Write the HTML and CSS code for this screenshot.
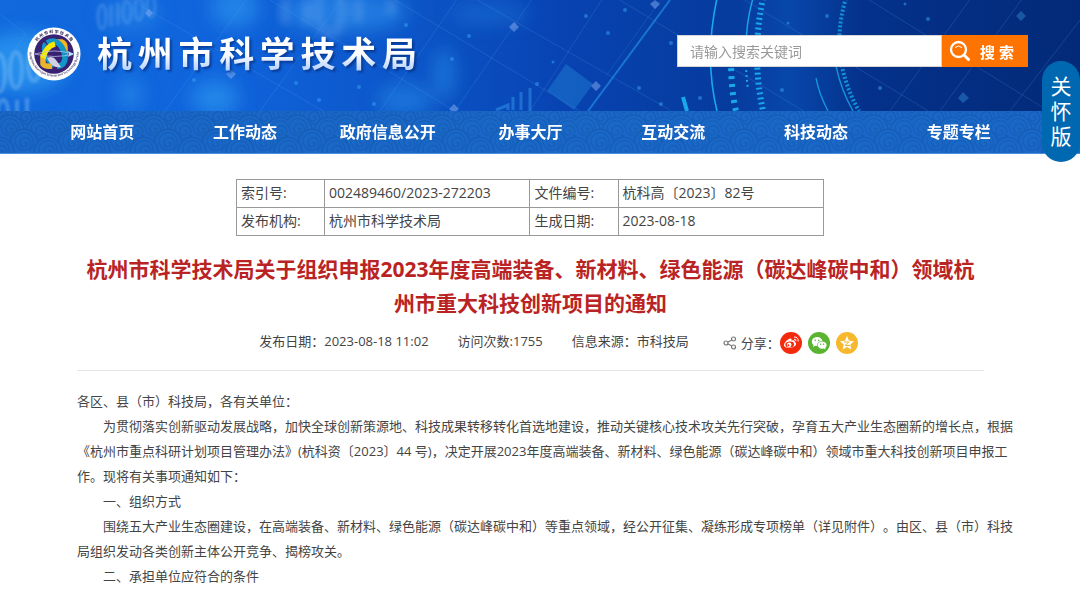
FILE: index.html
```html
<!DOCTYPE html>
<html lang="zh-CN">
<head>
<meta charset="utf-8">
<meta name="viewport" content="width=device-width, initial-scale=1">
<title>杭州市科学技术局</title>
<link rel="stylesheet" href="styles.css">
</head>
<body>
<header class="banner">
  <svg class="banner-art" viewBox="0 0 1080 111" preserveAspectRatio="xMidYMid slice" aria-hidden="true">
    <defs>
      <linearGradient id="sky" x1="0" y1="0" x2="1" y2="0">
        <stop offset="0" stop-color="#1169dc"/><stop offset=".2" stop-color="#1064dc"/>
        <stop offset=".38" stop-color="#0c55c8"/><stop offset=".52" stop-color="#0843b2"/>
        <stop offset=".68" stop-color="#063b9d"/><stop offset=".73" stop-color="#0847aa"/>
        <stop offset=".8" stop-color="#04318b"/><stop offset="1" stop-color="#032a78"/>
      </linearGradient>
      <filter id="soft" x="-50%" y="-50%" width="200%" height="200%"><feGaussianBlur stdDeviation="9"/></filter>
      <filter id="digit" x="-20%" y="-20%" width="140%" height="140%"><feGaussianBlur stdDeviation="1.6"/></filter>
      <filter id="haze" x="-20%" y="-20%" width="140%" height="140%"><feGaussianBlur stdDeviation="4"/></filter>
    </defs>
    <rect width="1080" height="111" fill="url(#sky)"/>
    <g filter="url(#soft)" fill="#2d97f0">
      <ellipse cx="22" cy="62" rx="46" ry="30" opacity=".8"/>
      <ellipse cx="130" cy="14" rx="30" ry="16" opacity=".4"/>
      <ellipse cx="235" cy="8" rx="24" ry="20" opacity=".6"/>
      <ellipse cx="345" cy="12" rx="62" ry="20" opacity=".55"/>
      <ellipse cx="215" cy="98" rx="24" ry="18" opacity=".65"/>
      <ellipse cx="130" cy="94" rx="12" ry="16" opacity=".55"/>
      <ellipse cx="405" cy="100" rx="28" ry="16" opacity=".45"/>
      <ellipse cx="444" cy="74" rx="10" ry="26" opacity=".5"/>
      <ellipse cx="490" cy="14" rx="40" ry="10" opacity=".3"/>
    </g>
    <g filter="url(#digit)" fill="none" stroke="#83c1f5" stroke-width="4" opacity=".45">
      <ellipse cx="-1" cy="73" rx="6" ry="19"/><ellipse cx="16" cy="70" rx="6" ry="18"/><ellipse cx="34" cy="64" rx="6" ry="17"/>
      <ellipse cx="3" cy="111" rx="5" ry="11"/><path d="M17 100v15M27 98v15"/>
    </g>
    <g filter="url(#digit)" fill="none" stroke="#83b5f5" stroke-width="3" opacity=".3">
      <ellipse cx="102" cy="17" rx="4" ry="12"/><path d="M111 5v22M118 3v22"/><ellipse cx="127" cy="12" rx="4" ry="11"/><ellipse cx="139" cy="9" rx="4" ry="11"/><ellipse cx="151" cy="6" rx="4" ry="11"/>
    </g>
    <g filter="url(#haze)" fill="none" stroke="#83b5f5" stroke-width="9" opacity=".3">
      <path d="M285 -2v26M307 0v25M358 -2v25M391 -2v17"/><ellipse cx="330" cy="10" rx="12" ry="24"/>
    </g>
    <g fill="none" stroke="#58a9f5" opacity=".2">
      <path d="M0 14 26 34 4 65M105-15 330 115M250-12 455 111M370-15 580 111M460-10 670 110M600-12 805 112M720-15 930 112M845-15 1050 112M165 111 250-5M260 111 345-5M380 111 460-5M455 111 537-8M530 111 605-5M890 111 973-5M940 111 1025-5M1010 111 1080 20"/>
    </g>
    <g stroke="#2292e8" opacity=".65"><path d="M588 111 670 0" stroke-width="2"/><path d="m606 76 54-75" opacity=".4"/></g>
    <path d="m566 64 27 20-19 26-27-19z" fill="#1d78d0" opacity=".55"/>
    <g fill="#85adf1" opacity=".5">
      <path d="m514 22 5 5-5 5-5-5zM655 0l5 4-5 5-5-5zM596 81l5 5-5 5-5-5zM454 104l5 5-5 4-5-4zM231 70l5 4-5 5-5-5zM149 9l4 4-4 4-4-4z"/>
      <path d="m1021 11 5 5-5 5-5-5zM963 92l6 6-6 5-5-5z" fill="#2e82cc"/>
    </g>
    <g fill="#36a5f1" opacity=".5">
      <circle cx="452" cy="59" r="2"/><circle cx="469" cy="36" r="2"/><circle cx="586" cy="16" r="2"/><circle cx="608" cy="33" r="2"/><circle cx="553" cy="62" r="1.5"/><circle cx="537" cy="84" r="2"/><circle cx="639" cy="88" r="2"/><circle cx="661" cy="104" r="2"/><circle cx="700" cy="98" r="2"/><circle cx="625" cy="10" r="2"/><circle cx="671" cy="43" r="2"/><circle cx="788" cy="23" r="1.5"/><circle cx="782" cy="90" r="2"/><circle cx="827" cy="16" r="2"/><circle cx="905" cy="4" r="1.5"/><circle cx="880" cy="88" r="2"/><circle cx="928" cy="19" r="2"/><circle cx="359" cy="87" r="2"/><circle cx="374" cy="104" r="2"/><circle cx="319" cy="100" r="2"/><circle cx="296" cy="83" r="2"/><circle cx="194" cy="80" r="2"/><circle cx="406" cy="25" r="2"/>
    </g>
    <path d="m496 110 12-5v5M513 97v13M521 92v18M530 88v23" stroke="#2c8ce2" stroke-width="3" fill="none" opacity=".6"/>
    <g fill="none" stroke="#18a9e8">
      <path d="M717-2q-13 60 0 113" stroke-width="1.6"/>
      <path d="M753-2q-8 28-7 58" stroke-width="1.4"/>
      <path d="M746 60q0 15 2 30" stroke-width="2" stroke-dasharray="2 3"/>
      <path d="M731 60q0 30 5 51" stroke-width="6" stroke-dasharray="3 5"/>
      <path d="M763-2q-12 57 0 113" stroke-width="6" stroke-dasharray="2 3"/>
      <path d="m683 97 4 14" stroke-width="4"/>
      <path d="M846-2q-18 58 13 113" stroke-width="4" stroke-dasharray="2 2" opacity=".8"/>
      <path d="M836 66q5 24 17 45M816 78q3 16 12 33" stroke-width="1.4" opacity=".8"/>
    </g>
  </svg>
  <div class="banner-row">
    <a class="brand" href="#">
      <svg class="emblem" viewBox="0 0 54 54" aria-hidden="true">
        <defs>
          <path id="arcTop" d="M6 27a21 21 0 0 1 42 0"/>
          <path id="arcBottom" d="M2.500 25a24.500 24.500 0 1 0 49 0"/>
        </defs>
        <circle cx="27" cy="27" r="26.5" fill="#fff"/>
        <circle cx="27" cy="27" r="19.8" fill="#382173"/>
        <text class="seal-cn" text-anchor="middle"><textPath href="#arcTop" startOffset="50%">杭 州 市 科 学 技 术 局</textPath></text>
        <text class="seal-en" text-anchor="middle"><textPath href="#arcBottom" startOffset="50%">Hangzhou Municipal Science and Technology Bureau</textPath></text>
        <g fill="none" stroke-width="5.500">
          <path d="M28 15h7q3 1 3 6v8" stroke="#f7b51e"/>
          <path d="M18 16q-3 5 0 12 3 8 9 11" stroke="#1196c8" stroke-width="3.500"/>
          <path d="M16 27v10q2 3 9 2" stroke="#e9b52c"/>
          <path d="M20 16q8-5 14 3 7 11 2 18-2 2-6 2" stroke="#1196c8"/>
          <path d="M28 17q-9 2-12 14" stroke="#f5e705"/>
        </g>
        <path d="M20 31q6-3 9 2l5 7q-9 2-14-9z" fill="#d3d0e4"/>
        <path d="M8 27q20-6 38 0-18 5-38 0" fill="none" stroke="#c6cce8" stroke-width=".7"/>
        <path d="m41 24 6 3-6 3 1-3z" fill="#a7e4ff"/>
      </svg>
      <span class="brand-name">杭州市科学技术局</span>
    </a>
    <form class="search" onsubmit="return false">
      <input class="search-input" type="text" placeholder="请输入搜索关键词" aria-label="请输入搜索关键词">
      <button class="search-button" type="submit">
        <svg class="search-icon" viewBox="0 0 22 22" fill="none" stroke="#fff" aria-hidden="true"><circle cx="9.5" cy="9.5" r="7.5" stroke-width="2.3"/><path d="m15 15 4.500 4.500" stroke-width="3" stroke-linecap="round"/><path d="M6 7.500q3.500-3 7 0" stroke-width="1"/></svg>
        <span>搜 索</span>
      </button>
    </form>
  </div>
</header>
<nav class="nav" aria-label="主导航">
  <svg class="nav-pattern" aria-hidden="true">
    <defs>
      <g id="swirl">
        <circle r="14" fill="#1968c7"/>
        <path d="M0 0c2-2 4 1 2 3s-7 1-6-4 8-6 10-1-1 10-7 9-10-8-7-13 11-6 15-1 2 12-2 15"/>
        <circle r="13.500"/>
      </g>
      <pattern id="clouds" width="48" height="42" patternUnits="userSpaceOnUse">
        <g fill="none" stroke="#155eb8" stroke-width="1.2">
          <use href="#swirl" x="0" y="-2"/><use href="#swirl" x="48" y="-2"/><use href="#swirl" x="25" y="6"/>
          <use href="#swirl" x="10" y="18"/><use href="#swirl" x="40" y="20"/>
          <use href="#swirl" x="24" y="32"/><use href="#swirl" x="0" y="40"/><use href="#swirl" x="48" y="40"/>
        </g>
      </pattern>
    </defs>
    <rect width="100%" height="100%" fill="#1968c7"/>
    <rect width="100%" height="100%" fill="url(#clouds)"/>
  </svg>
  <ul class="nav-list">
    <li><a href="#">网站首页</a></li>
    <li><a href="#">工作动态</a></li>
    <li><a href="#">政府信息公开</a></li>
    <li><a href="#">办事大厅</a></li>
    <li><a href="#">互动交流</a></li>
    <li><a href="#">科技动态</a></li>
    <li><a href="#">专题专栏</a></li>
  </ul>
</nav>
<button class="care" type="button">关怀版</button>

<main class="page">
  <table class="index">
    <tbody>
      <tr><th scope="row">索引号:</th><td>002489460/2023-272203</td><th scope="row">文件编号:</th><td>杭科高〔2023〕82号</td></tr>
      <tr><th scope="row">发布机构:</th><td>杭州市科学技术局</td><th scope="row">生成日期:</th><td>2023-08-18</td></tr>
    </tbody>
  </table>
  <article class="article">
    <h1 class="title">杭州市科学技术局关于组织申报2023年度高端装备、新材料、绿色能源（碳达峰碳中和）领域杭州市重大科技创新项目的通知</h1>
    <div class="meta">
      <span>发布日期：2023-08-18 11:02</span>
      <span>访问次数:1755</span>
      <span>信息来源：市科技局</span>
      <div class="share">
        <svg class="share-icon" viewBox="0 0 14 14" fill="none" stroke="#777" stroke-width="1.2" aria-hidden="true"><circle cx="3" cy="7" r="2"/><circle cx="10.5" cy="3" r="2"/><circle cx="10.5" cy="11" r="2"/><path d="m5 6 4-2M5 8l4 2"/></svg>
        <span class="share-label">分享：</span>
        <div class="share-links">
          <a href="#" aria-label="微博"><svg viewBox="0 0 22 22" aria-hidden="true"><circle cx="11" cy="11" r="11" fill="#f5290c"/><path d="M9 7c2-1 3 0 2.500 1.700 2-.7 3.500-.5 3.200 1.300 1.500.6 2 2 .7 3.600-2.400 2.900-8.700 3.200-10.800 1C2.800 12.800 5.600 8.600 9 7z" fill="#fff"/><ellipse cx="9.700" cy="12.500" rx="4.400" ry="3" transform="rotate(-8 9.700 12.500)" fill="#f5290c"/><circle cx="9.200" cy="12.800" r="2.300" fill="#fff"/><circle cx="8.500" cy="13.200" r=".9" fill="#f5290c"/><path d="M14 7.200q2-.2 2 2M14 5q4.400-.3 4.200 4.500" fill="none" stroke="#fff"/></svg></a>
          <a href="#" aria-label="微信"><svg viewBox="0 0 22 22" aria-hidden="true"><circle cx="11" cy="11" r="11" fill="#5bb431"/><path d="M9 5c3 0 5 1.700 5.300 4-3.200 0-5.500 2-5.100 5l-2.200-.3L5 15l.5-2C2.300 10.400 4 5 9 5z" fill="#fff"/><path d="M14 9.600c5 0 5.800 4.600 3.200 6.400l.4 1.600-1.900-1c-3.500.7-6-1-6-3.500 0-2 2-3.500 4.300-3.500z" fill="#fff"/><g fill="#5bb431"><circle cx="7.200" cy="8.200" r=".8"/><circle cx="10.700" cy="8.200" r=".8"/><circle cx="12.700" cy="12.200" r=".7"/><circle cx="15.600" cy="12.200" r=".7"/></g></svg></a>
          <a href="#" aria-label="QQ空间"><svg viewBox="0 0 22 22" aria-hidden="true"><circle cx="11" cy="11" r="11" fill="#f6b82d"/><path d="m11 4 2 4.700 5 .5-3.700 3.400 1 5L11 15l-4.300 2.600 1-5L4 9.200l5-.5z" fill="#fff"/><path d="M8 10h5l-4 3.500h5" fill="none" stroke="#f6b82d"/></svg></a>
        </div>
      </div>
    </div>
    <div class="body">
      <p class="salute">各区、县（市）科技局，各有关单位：</p>
      <p>为贯彻落实创新驱动发展战略，加快全球创新策源地、科技成果转移转化首选地建设，推动关键核心技术攻关先行突破，孕育五大产业生态圈新的增长点，根据《杭州市重点科研计划项目管理办法》(杭科资〔2023〕44 号)，决定开展2023年度高端装备、新材料、绿色能源（碳达峰碳中和）领域市重大科技创新项目申报工作。现将有关事项通知如下：</p>
      <p>一、组织方式</p>
      <p>围绕五大产业生态圈建设，在高端装备、新材料、绿色能源（碳达峰碳中和）等重点领域，经公开征集、凝练形成专项榜单（详见附件）。由区、县（市）科技局组织发动各类创新主体公开竞争、揭榜攻关。</p>
      <p>二、承担单位应符合的条件</p>
    </div>
  </article>
</main>
</body>
</html>
```

FILE: styles.css
```css
* { box-sizing: border-box; }

body {
  margin: 0;
  background: #fff;
  color: #444;
  font-family: "Open Sans", "Noto Sans CJK SC", sans-serif;
  font-size: 13px;
  text-spacing-trim: space-all;
}

a { color: inherit; text-decoration: none; }
button, input { font-family: inherit; border: 0; border-radius: 0; }

/* Banner */
.banner { position: relative; background: #0a4db8; overflow: hidden; }
.banner-art { position: absolute; inset: 0; width: 100%; height: 100%; }
.banner-row {
  position: relative;
  display: flex;
  justify-content: space-between;
  align-items: center;
  padding: 27px 52px 30px 27px;
}
.brand { display: flex; align-items: center; gap: 16px; }
.emblem { display: block; width: 54px; height: 54px; overflow: visible; }
.seal-cn { font-size: 4px; font-weight: 700; fill: #2b2050; }
.seal-en { font-size: 3px; font-weight: 600; fill: #2b2050; }
.brand-name {
  width: 320px;
  font-size: 35px;
  font-weight: 700;
  line-height: 54px;
  text-align: justify;
  text-align-last: justify;
  color: transparent;
  background: linear-gradient(#fff 50%, #b5d1ff 80%);
  background-clip: text;
  -webkit-background-clip: text;
  filter: drop-shadow(2px 2px 1px rgba(3, 36, 110, .6));
}

.search { display: flex; height: 32px; margin-bottom: 6px; }
.search-input {
  width: 265px;
  padding: 0 12px;
  border: 1px solid #d5d5d5;
  background: #fff;
  font-size: 14px;
}
.search-input::placeholder { color: #999; opacity: 1; }
.search-button {
  display: flex;
  align-items: center;
  gap: 9px;
  padding: 0 14px 0 7px;
  background: #ff7400;
  color: #fff;
  font-size: 15px;
  font-weight: 700;
}
.search-icon { width: 22px; height: 22px; }

/* Navigation */
.nav { position: relative; border-bottom: 1px solid #4a90dd; }
.nav-pattern { position: absolute; inset: 0; width: 100%; height: 100%; }
.nav-list {
  position: relative;
  display: grid;
  grid-template-columns: repeat(7, 1fr);
  margin: 0;
  padding: 0 50px 0 31px;
  list-style: none;
}
.nav-list a {
  display: block;
  color: #fff;
  font-size: 16px;
  font-weight: 700;
  line-height: 42px;
  text-align: center;
  white-space: nowrap;
}

/* Floating accessibility switch */
.care {
  position: absolute;
  top: 61px;
  right: 0;
  width: 38px;
  padding: 13px 8px;
  border-radius: 19px;
  background: #0068b0;
  color: #fff;
  font-size: 21px;
  line-height: 25px;
}

/* Content */
.page { padding: 25px 50px 0 30px; }
.index {
  width: 588px;
  margin: 0 auto;
  border-collapse: collapse;
  table-layout: fixed;
  font-size: 14px;
  line-height: 20px;
}
.index th, .index td {
  width: 35%;
  padding: 3px 4px 4px;
  border: 1px solid #999;
  font-weight: 400;
  text-align: left;
  white-space: nowrap;
}
.index th { width: 15%; }

.article { padding: 0 46px 0 47px; }
.title {
  margin: 16px 0 0;
  color: #ba2323;
  font-size: 21px;
  font-weight: 700;
  line-height: 34px;
  text-align: center;
}
.meta {
  display: flex;
  justify-content: center;
  align-items: center;
  gap: 29px;
  padding: 1px 0 9px 56px;
  border-bottom: 1px solid #e5e5e5;
  line-height: 40px;
}
.share { display: flex; align-items: center; margin-left: 5px; padding-top: 4px; line-height: 36px; }
.share-icon { width: 14px; height: 14px; margin-right: 4px; }
.share-links { display: flex; gap: 6px; }
.share-links a, .share-links svg { display: block; width: 22px; height: 22px; }

.body { margin: 18px -30px 0 0; line-height: 25px; }
.body p { margin: 0; text-indent: 2em; }
.body .salute { text-indent: 0; }
```
